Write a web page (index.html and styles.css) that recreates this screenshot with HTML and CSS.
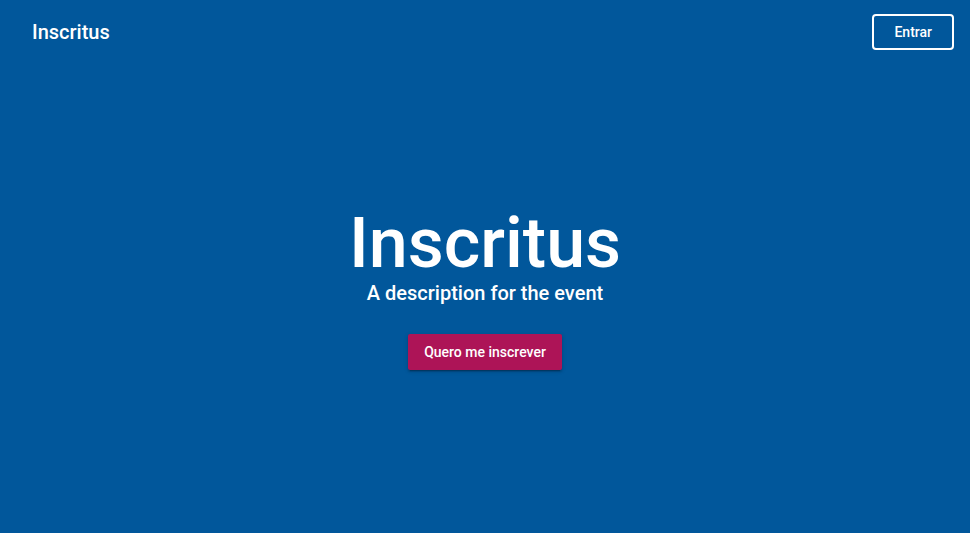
FILE: index.html
```html
<!DOCTYPE html>
<html lang="pt">
<head>
<meta charset="utf-8">
<title>Inscritus</title>
<link rel="stylesheet" href="styles.css">
</head>
<body>
<div class="app">
  <header class="toolbar">
    <div class="brand">Inscritus</div>
    <button class="btn-outline">Entrar</button>
  </header>
  <main class="hero">
    <h1 class="hero-title">Inscritus</h1>
    <p class="hero-sub">A description for the event</p>
    <button class="btn-primary">Quero me inscrever</button>
  </main>
</div>
</body>
</html>
```

FILE: styles.css
```css
* { box-sizing: border-box; }
html, body { margin: 0; padding: 0; height: 100%; }
body {
  background: #01579b;
  color: #fff;
  font-family: Roboto, "Noto Sans", sans-serif;
}
.app { height: 100%; display: flex; flex-direction: column; }
.toolbar {
  height: 64px;
  flex: 0 0 64px;
  display: flex;
  align-items: center;
  justify-content: space-between;
  padding: 0 16px 0 32px;
}
.brand { font-size: 20px; font-weight: 500; }
.btn-outline {
  height: 36px;
  padding: 0 20px;
  background: transparent;
  border: 2px solid #fff;
  border-radius: 4px;
  color: #fff;
  font-family: inherit;
  font-size: 14px;
  font-weight: 500;
}
.hero {
  flex: 1;
  display: flex;
  flex-direction: column;
  align-items: center;
  justify-content: center;
  padding-bottom: 20px;
}
.hero-title {
  margin: 0;
  font-size: 70px;
  font-weight: 500;
  line-height: 70px;
}
.hero-sub {
  margin: 0;
  font-size: 20px;
  font-weight: 500;
  line-height: 30px;
}
.btn-primary {
  margin-top: 26px;
  height: 36px;
  padding: 0 16px;
  background: #ad1457;
  border: 0;
  border-radius: 2px;
  color: #fff;
  font-family: inherit;
  font-size: 14px;
  font-weight: 500;
  box-shadow: 0 3px 1px -2px rgba(0,0,0,.2), 0 2px 2px 0 rgba(0,0,0,.14), 0 1px 5px 0 rgba(0,0,0,.12);
}
```
